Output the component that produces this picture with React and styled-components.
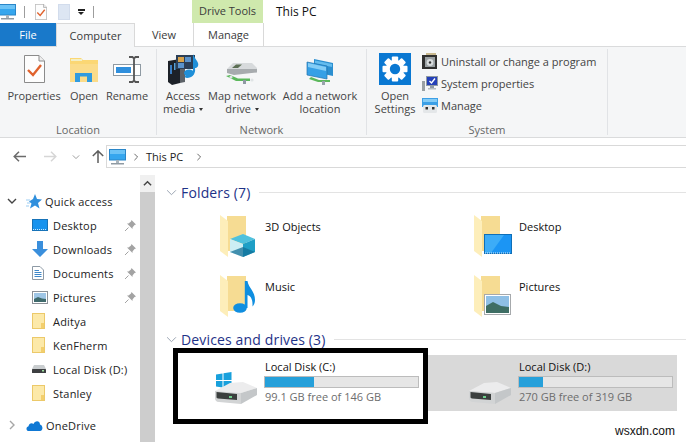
import styled, { createGlobalStyle } from "styled-components";

const GlobalStyle = createGlobalStyle`
  html, body {
    margin: 0;
    padding: 0;
    background: #fff;
  }
  * {
    box-sizing: border-box;
  }
`;

function Monitor({ w = 17, h = 16 }) {
  return (
    <svg width={w} height={h} viewBox="0 0 17 16">
      <rect x="0.5" y="0.5" width="16" height="10.5" fill="#35a6ee" stroke="#2a86c8" />
      <rect x="1" y="1" width="15" height="4" fill="#6cc3f6" />
      <rect x="7" y="11" width="3" height="3" fill="#a9b4bc" />
      <rect x="2" y="14" width="13" height="1.5" fill="#8f9aa3" />
    </svg>
  );
}

function PageCheck({ w = 21, h = 28 }) {
  return (
    <svg width={w} height={h} viewBox="0 0 21 28">
      <path d="M0.5 0.5H15L20.5 6V27.5H0.5Z" fill="#fdfdfd" stroke="#8b8b8b" />
      <path d="M15 0.5V6H20.5" fill="#eee" stroke="#8b8b8b" />
      <path d="M4 15L9 20L17 10" fill="none" stroke="#e0622d" strokeWidth="2.4" />
    </svg>
  );
}

function OpenFolder() {
  return (
    <svg width="29" height="25" viewBox="0 0 29 25">
      <path d="M0 1H11L13 3H28V25H0Z" fill="#fbd774" />
      <rect x="1" y="2" width="11" height="2" fill="#f3efc5" />
      <rect x="0" y="7" width="28" height="18" fill="#fbdc8a" />
      <path d="M5 25V16H22V25H17V19.5H10V25Z" fill="#2f9be0" />
    </svg>
  );
}

function RenameIcon() {
  return (
    <svg width="29" height="27" viewBox="0 0 29 27">
      <rect x="0.5" y="8.5" width="27" height="11" fill="#fff" stroke="#8f9aa3" />
      <rect x="3" y="11" width="15" height="6" fill="#2f8fdd" />
      <path d="M16 1H19.5L21 2.5L22.5 1H26M21 2.5V24.5M16 26H19.5L21 24.5L22.5 26H26" fill="none" stroke="#555" strokeWidth="1.8" />
    </svg>
  );
}

function MediaIcon() {
  return (
    <svg width="33" height="31" viewBox="0 0 33 31">
      <path d="M1 7L13 5V29L5 31L1 28Z" fill="#1c2128" />
      <path d="M13 5L18 8V28L13 29Z" fill="#5c6268" />
      <rect x="3" y="11" width="2" height="9" fill="#3b7fc4" />
      <rect x="7" y="9" width="1.5" height="7" fill="#56a2da" />
      <rect x="9" y="1" width="19" height="14" fill="#2b3f57" />
      <rect x="11" y="3" width="6" height="5" fill="#d8a24a" />
      <rect x="18" y="3" width="6" height="5" fill="#5a93cc" />
      <rect x="11" y="9" width="6" height="5" fill="#5a93cc" />
      <path d="M26 0V16C26 19 23 21 20 21C17 21 17 24 20 24C25 24 29 20 28 14C30 14 32 12 31 9C30 6 28 5 26 0Z" fill="#1f8fd8" />
      <ellipse cx="22" cy="19" rx="5" ry="3.5" fill="#1f8fd8" />
    </svg>
  );
}

function NetDrive() {
  return (
    <svg width="32" height="23" viewBox="0 0 32 23">
      <path d="M1 7L7 1H26L31 6V10L7 11L1 10Z" fill="#d7dadc" />
      <path d="M6 6L10 2.5H16L12 6Z" fill="#5c6f54" />
      <path d="M1 7H31V10.5L8 13L1 11Z" fill="#a7abae" />
      <path d="M0 14L10 19H24V16.5H12L4 13Z" fill="#5cb85c" />
      <rect x="17" y="18" width="3" height="4" fill="#8f9aa3" />
      <circle cx="5" cy="15" r="1.6" fill="#dfe3e5" />
      <circle cx="26" cy="18" r="1.6" fill="#dfe3e5" />
    </svg>
  );
}

function NetPlaces() {
  return (
    <svg width="28" height="26" viewBox="0 0 28 26">
      <path d="M8 0L27 4V17L8 13Z" fill="#2b8fd0" />
      <path d="M9 1.5L26 5V8L9 4.5Z" fill="#63bcef" />
      <path d="M1 3L21 7V20L1 16Z" fill="#36a0e6" stroke="#2274ad" strokeWidth="0.7" />
      <path d="M2 4L20 8V12L2 8Z" fill="#84cdf6" />
      <path d="M3 20L12 23H24V21H13L5 18Z" fill="#5cb85c" />
      <rect x="16" y="22" width="3" height="4" fill="#98a3ab" />
    </svg>
  );
}

function GearTile() {
  return (
    <svg width="32" height="32" viewBox="0 0 32 32">
      <rect width="32" height="32" fill="#0a78d2" />
      <g fill="#fff">
        <circle cx="16" cy="16" r="9.2" />
        <rect x="12.8" y="3.5" width="6.4" height="25" rx="1" />
        <rect x="12.8" y="3.5" width="6.4" height="25" rx="1" transform="rotate(45 16 16)" />
        <rect x="12.8" y="3.5" width="6.4" height="25" rx="1" transform="rotate(90 16 16)" />
        <rect x="12.8" y="3.5" width="6.4" height="25" rx="1" transform="rotate(135 16 16)" />
      </g>
      <circle cx="16" cy="16" r="5.2" fill="#0a78d2" />
    </svg>
  );
}

function UninstallIcon() {
  return (
    <svg width="15" height="16" viewBox="0 0 15 16">
      <path d="M4 0H14V4H4Z" fill="#c9b98f" />
      <rect x="0" y="2" width="15" height="14" fill="#2f2f2f" />
      <rect x="3" y="4" width="10" height="10" fill="#9aa0a3" />
      <circle cx="8" cy="9.5" r="3.4" fill="#d8dcde" />
      <circle cx="8" cy="9.5" r="1.2" fill="#333" />
    </svg>
  );
}

function SystemIcon() {
  return (
    <svg width="16" height="15" viewBox="0 0 16 15">
      <rect x="0" y="5" width="3" height="10" fill="#9aa0a3" />
      <rect x="4.5" y="0.5" width="11" height="9" fill="#2440b8" stroke="#8f9aa3" />
      <path d="M7.5 5L9.5 7L13 2.5" fill="none" stroke="#fff" strokeWidth="1.4" />
      <rect x="8" y="10" width="4" height="2" fill="#8f9aa3" />
      <rect x="6" y="12" width="8" height="1.5" fill="#b5bbc0" />
    </svg>
  );
}

function ManageIcon() {
  return (
    <svg width="16" height="15" viewBox="0 0 16 15">
      <rect x="0" y="0" width="16" height="9" fill="#3c9fe6" />
      <rect x="1" y="1" width="14" height="3" fill="#84cbf5" />
      <rect x="1" y="7" width="14" height="8" rx="1.5" fill="#e4e7e9" />
      <rect x="3.5" y="9" width="2.5" height="2.5" fill="#333" />
      <rect x="10" y="9" width="2.5" height="2.5" fill="#333" />
    </svg>
  );
}

function BackArrow({ color = "#6b6b6b", flip }) {
  return (
    <svg width="13" height="11" viewBox="0 0 13 11" style={flip ? { transform: "scaleX(-1)" } : undefined}>
      <path d="M6 0.7L1.2 5.5L6 10.3M1.2 5.5H13" fill="none" stroke={color} strokeWidth="1.5" />
    </svg>
  );
}

function UpArrow() {
  return (
    <svg width="12" height="13" viewBox="0 0 12 13">
      <path d="M0.8 6L6 0.9L11.2 6M6 0.9V13" fill="none" stroke="#5e5e5e" strokeWidth="1.5" />
    </svg>
  );
}

function Chevron({ dir = "down", size = 9, color = "#555", width = 1.2 }) {
  const d = {
    down: "M1 3L5 7L9 3",
    up: "M1 7L5 3L9 7",
    right: "M3 1L7 5L3 9",
  }[dir];
  return (
    <svg width={size} height={size} viewBox="0 0 10 10">
      <path d={d} fill="none" stroke={color} strokeWidth={width} />
    </svg>
  );
}

function StarIcon() {
  return (
    <svg width="16" height="15" viewBox="0 0 16 15">
      <path d="M9 0L11 5L16 5.5L12 9L13.5 14.5L9 11.5L4 14.5L5.5 9.5L3 7.5L7 5Z" fill="#2f8fdd" />
      <path d="M0 6H4M1 9H4M0 12H3" stroke="#9ccdf2" strokeWidth="1" />
    </svg>
  );
}

function NavDesktop() {
  return (
    <svg width="16" height="12" viewBox="0 0 16 12">
      <rect x="0.5" y="0.5" width="15" height="11" fill="#1793ee" stroke="#1773b8" />
      <path d="M1 10.5H15" stroke="#cfe9fb" strokeDasharray="1 1" />
    </svg>
  );
}

function NavDownload() {
  return (
    <svg width="16" height="16" viewBox="0 0 16 16">
      <path d="M5 0H11V8H16L8 16L0 8H5Z" fill="#3a8fdc" />
    </svg>
  );
}

function NavDocument() {
  return (
    <svg width="12" height="14" viewBox="0 0 12 14">
      <path d="M0.5 0.5H8L11.5 4V13.5H0.5Z" fill="#fff" stroke="#8e9aa5" />
      <path d="M2.5 4.5H7M2.5 6.5H9.5M2.5 8.5H9.5M2.5 10.5H9.5" stroke="#3e88c9" />
    </svg>
  );
}

function NavPicture() {
  return (
    <svg width="16" height="13" viewBox="0 0 16 13">
      <rect x="0.5" y="0.5" width="15" height="12" fill="#fff" stroke="#8c9198" />
      <rect x="2" y="2" width="12" height="9" fill="#9fc6e6" />
      <path d="M2 8L6 6L10 7.5L14 8V11H2Z" fill="#3f6a6c" />
    </svg>
  );
}

function NavFolder() {
  return (
    <svg width="13" height="16" viewBox="0 0 13 16">
      <rect x="0.5" y="0.5" width="12" height="15" fill="#fce9a9" stroke="#ecc969" />
      <rect x="9" y="10" width="3" height="5" fill="#f3cf6d" />
    </svg>
  );
}

function NavDisk() {
  return (
    <svg width="14" height="8" viewBox="0 0 14 8">
      <path d="M2 0H12L14 4H0Z" fill="#c9cdcf" />
      <rect x="0" y="4" width="14" height="4" rx="0.5" fill="#3d3f41" />
      <rect x="10" y="5" width="2" height="1.5" fill="#9fe0a0" />
    </svg>
  );
}

function CloudIcon() {
  return (
    <svg width="17" height="11" viewBox="0 0 17 11">
      <path d="M3 11C0 11 -0.5 7 2.5 6.2C3 3 6 2.5 7.5 4C9 0 14 0.5 14 4.5C17 5 17.5 11 14 11Z" fill="#0f78d4" />
    </svg>
  );
}

function PinIcon() {
  return (
    <svg width="11" height="11" viewBox="0 0 11 11">
      <path d="M6.5 0L11 4.5L9.5 5L7.5 7.5L7.5 9L2 3.5L3.5 3.5L6 1.5Z" fill="#a3a3a3" />
      <path d="M3.5 7.5L0 11" stroke="#a3a3a3" />
    </svg>
  );
}

function BigFolder({ children }) {
  return (
    <svg width="38" height="43" viewBox="0 0 38 43">
      <rect x="7" y="1" width="19" height="35" fill="#f6dc93" />
      <path d="M0 0L8 6V42L0 36Z" fill="#fdeeba" />
      {children}
    </svg>
  );
}

function Cube() {
  return (
    <g>
      <path d="M10 24L23 19L35 24L23 29Z" fill="#4fc1dd" />
      <path d="M10 24L23 29V42L10 37Z" fill="#cdeef4" />
      <path d="M35 24L23 29V42L35 37Z" fill="#1e9fc6" />
      <path d="M10 37L23 32L35 37L23 42Z" fill="#136f97" opacity="0.75" />
    </g>
  );
}

function Note() {
  return (
    <g fill="#0f8ee0">
      <ellipse cx="20" cy="33" rx="6.8" ry="4.8" />
      <path d="M24.8 33V6H27.5C28.5 13 35 16 35 25C35 28 34 30 32.5 31.5C33 25 31 21 27.5 20V33Z" />
    </g>
  );
}

function ScreenBadge() {
  return (
    <g>
      <rect x="10.5" y="19.5" width="27" height="19" fill="#1b95f4" stroke="#0e6fb8" />
      <path d="M11 20H30L17 38H11Z" fill="#3cacf7" />
      <path d="M11 38H37" stroke="#dff1fd" strokeDasharray="1 1" />
    </g>
  );
}

function PhotoBadge() {
  return (
    <g>
      <rect x="10.5" y="19.5" width="26" height="20" fill="#fff" stroke="#a6a9ac" />
      <rect x="12" y="21" width="23" height="17" fill="#8fc0e6" />
      <path d="M12 31L19 27L27 31L35 32V38H12Z" fill="#3e6e64" />
    </g>
  );
}

function DriveIcon({ windows }) {
  return (
    <svg width="44" height="34" viewBox="0 0 44 34">
      {windows && (
        <path d="M1 2.5L7.5 1.5V8H1ZM8.5 1.3L16.5 0V8H8.5ZM1 9H7.5V15.5L1 14.5ZM8.5 9H16.5V17L8.5 15.8Z" fill="#18a0dc" />
      )}
      <path d="M0 19L15 11L28 10L42 16L26 21Z" fill="#ececed" />
      <path d="M26 21L42 16V23L26 32Z" fill="#c4c7c9" />
      <path d="M0 19L26 21V32L4 30C1 30 0 28 0 26Z" fill="#d2d4d5" />
      <path d="M1.5 20L22 22V28L3 26.5C2 26.4 1.5 26 1.5 25Z" fill="#3b3f3e" />
      <rect x="14" y="24" width="3" height="2" fill="#6fd18d" />
    </svg>
  );
}

export default function App() {
  const folders = [
    { name: "3D Objects", badge: <Cube /> },
    { name: "Desktop", badge: <ScreenBadge /> },
    { name: "Music", badge: <Note /> },
    { name: "Pictures", badge: <PhotoBadge /> },
  ];
  const navItems = [
    { name: "Desktop", icon: <NavDesktop />, pin: true },
    { name: "Downloads", icon: <NavDownload />, pin: true },
    { name: "Documents", icon: <NavDocument />, pin: true },
    { name: "Pictures", icon: <NavPicture />, pin: true },
    { name: "Aditya", icon: <NavFolder /> },
    { name: "KenFherm", icon: <NavFolder /> },
    { name: "Local Disk (D:)", icon: <NavDisk /> },
    { name: "Stanley", icon: <NavFolder /> },
  ];

  return (
    <Window>
      <GlobalStyle />
      <TitleBar>
        <QuickAccess>
          <Monitor />
          <QatRule />
          <QatPage><PageCheck w={12} h={16} /></QatPage>
          <BlankPage />
          <QatCaret />
          <QatRule />
        </QuickAccess>
        <ContextTab>Drive Tools</ContextTab>
        <TitleText>This PC</TitleText>
      </TitleBar>

      <TabRow>
        <FileTab>File</FileTab>
        <ActiveTab>Computer</ActiveTab>
        <Tab $w={58}>View</Tab>
        <ManageTab>Manage</ManageTab>
      </TabRow>

      <Ribbon>
        <Group $w={157}>
          <GroupBody $pad={4}>
            <BigButton $w={60}>
              <IconSlot><PageCheck /></IconSlot>
              <BigLabel>Properties</BigLabel>
            </BigButton>
            <BigButton $w={40}>
              <IconSlot><OpenFolder /></IconSlot>
              <BigLabel>Open</BigLabel>
            </BigButton>
            <BigButton $w={46}>
              <IconSlot><RenameIcon /></IconSlot>
              <BigLabel>Rename</BigLabel>
            </BigButton>
          </GroupBody>
          <GroupLabel>Location</GroupLabel>
        </Group>

        <Group $w={210}>
          <GroupBody $pad={3}>
            <BigButton $w={46}>
              <IconSlot><MediaIcon /></IconSlot>
              <BigLabel>Access<br />media <Caret /></BigLabel>
            </BigButton>
            <BigButton $w={72}>
              <IconSlot $drop={8}><NetDrive /></IconSlot>
              <BigLabel>Map network<br />drive <Caret /></BigLabel>
            </BigButton>
            <BigButton $w={84}>
              <IconSlot $drop={5}><NetPlaces /></IconSlot>
              <BigLabel>Add a network<br />location</BigLabel>
            </BigButton>
          </GroupBody>
          <GroupLabel>Network</GroupLabel>
        </Group>

        <Group $w={241}>
          <GroupBody $pad={7} $gap={6}>
            <BigButton $w={42}>
              <IconSlot><GearTile /></IconSlot>
              <BigLabel>Open<br />Settings</BigLabel>
            </BigButton>
            <SmallStack>
              <SmallButton><SmallSlot><UninstallIcon /></SmallSlot>Uninstall or change a program</SmallButton>
              <SmallButton><SmallSlot><SystemIcon /></SmallSlot>System properties</SmallButton>
              <SmallButton><SmallSlot><ManageIcon /></SmallSlot>Manage</SmallButton>
            </SmallStack>
          </GroupBody>
          <GroupLabel>System</GroupLabel>
        </Group>
      </Ribbon>

      <AddressRow>
        <NavButtons>
          <BackArrow />
          <BackArrow color="#d6d6d6" flip />
          <Chevron color="#9a9a9a" size={8} />
          <UpArrow />
        </NavButtons>
        <AddressBox>
          <Monitor />
          <Chevron dir="right" size={8} color="#666" />
          <Crumb>This PC</Crumb>
          <Chevron dir="right" size={8} color="#666" />
        </AddressBox>
      </AddressRow>

      <Main>
        <Sidebar>
          <NavHead>
            <Twisty><Chevron size={10} color="#444" width={1.4} /></Twisty>
            <StarIcon />
            <NavText>Quick access</NavText>
          </NavHead>
          {navItems.map((item) => (
            <NavRow key={item.name}>
              <NavIcon>{item.icon}</NavIcon>
              <NavText>{item.name}</NavText>
              {item.pin && <NavPin><PinIcon /></NavPin>}
            </NavRow>
          ))}
          <OneDriveRow>
            <Twisty><Chevron dir="right" size={10} color="#a6a6a6" width={1.4} /></Twisty>
            <CloudIcon />
            <NavText>OneDrive</NavText>
          </OneDriveRow>
        </Sidebar>

        <ScrollTrack>
          <ScrollUp><Chevron dir="up" size={9} color="#444" width={1.6} /></ScrollUp>
          <ScrollThumb />
        </ScrollTrack>

        <Content>
          <SectionHead>
            <SectionChevron><Chevron size={11} color="#9aa4b2" width={0.9} /></SectionChevron>
            <SectionTitle>Folders (7)</SectionTitle>
            <SectionRule />
          </SectionHead>
          <FolderGrid>
            {folders.map((f) => (
              <FolderTile key={f.name}>
                <BigFolder>{f.badge}</BigFolder>
                <TileName>{f.name}</TileName>
              </FolderTile>
            ))}
          </FolderGrid>

          <SectionHead>
            <SectionChevron><Chevron size={11} color="#9aa4b2" width={0.9} /></SectionChevron>
            <SectionTitle>Devices and drives (3)</SectionTitle>
            <SectionRule />
          </SectionHead>
          <DriveGrid>
            <DriveTile $framed>
              <DriveIconSlot $top={19}><DriveIcon windows /></DriveIconSlot>
              <DriveInfo $top={2}>
                <DriveName>Local Disk (C:)</DriveName>
                <UsageBar><UsageFill style={{ width: `${(46.9 / 146) * 100}%` }} /></UsageBar>
                <FreeText>99.1 GB free of 146 GB</FreeText>
              </DriveInfo>
            </DriveTile>
            <DriveTile $selected>
              <DriveIconSlot $top={17}><DriveIcon /></DriveIconSlot>
              <DriveInfo $top={0}>
                <DriveName>Local Disk (D:)</DriveName>
                <UsageBar><UsageFill style={{ width: `${(49 / 319) * 100}%` }} /></UsageBar>
                <FreeText>270 GB free of 319 GB</FreeText>
              </DriveInfo>
            </DriveTile>
          </DriveGrid>
        </Content>
      </Main>
      <Watermark>wsxdn.com</Watermark>
    </Window>
  );
}

const uiFont = `"Open Sans", "Noto Sans", sans-serif`;

const Window = styled.div`
  position: relative;
  width: 686px;
  height: 442px;
  overflow: hidden;
  display: flex;
  flex-direction: column;
  background: #fff;
  color: #222;
  font-family: ${uiFont};
  font-size: 11px;
`;

const TitleBar = styled.div`
  height: 23px;
  display: flex;
  flex-shrink: 0;
`;

const QuickAccess = styled.div`
  width: 192px;
  display: flex;
  align-items: center;
  gap: 8px;

  svg:first-child {
    margin-left: -1px;
  }
`;

const QatRule = styled.span`
  width: 1px;
  height: 12px;
  background: #9d9d9d;
`;

const QatPage = styled.span`
  display: flex;
  margin-left: 3px;
`;

const BlankPage = styled.span`
  width: 12px;
  height: 16px;
  margin-left: 3px;
  background: #dde6f3;
  border: 1px solid #d2dcec;
`;

const QatCaret = styled.span`
  width: 7px;
  height: 6px;
  border-top: 2px solid #222;
  position: relative;

  &::after {
    content: "";
    position: absolute;
    left: 0;
    top: 1px;
    border-left: 3.5px solid transparent;
    border-right: 3.5px solid transparent;
    border-top: 3.5px solid #222;
  }
`;

const ContextTab = styled.div`
  width: 71px;
  background: #cfe9ad;
  color: #3b3b3b;
  text-align: center;
  line-height: 21px;
`;

const TitleText = styled.div`
  margin-left: 13px;
  line-height: 23px;
  font-size: 12px;
  color: #111;
`;

const TabRow = styled.div`
  height: 23px;
  display: flex;
  flex-shrink: 0;
  line-height: 23px;
  color: #3a3a3a;
`;

const FileTab = styled.div`
  width: 56px;
  background: #1979ca;
  color: #fff;
  text-align: center;
`;

const ActiveTab = styled.div`
  width: 79px;
  margin-bottom: -1px;
  background: #f5f6f7;
  border: 1px solid #d9d9d9;
  border-bottom: none;
  text-align: center;
  position: relative;
  z-index: 1;
`;

const Tab = styled.div`
  width: ${(props) => props.$w}px;
  text-align: center;
`;

const ManageTab = styled.div`
  width: 71px;
  border-left: 1px solid #d9d9d9;
  border-right: 1px solid #d9d9d9;
  text-align: center;
`;

const Ribbon = styled.div`
  height: 92px;
  display: flex;
  flex-shrink: 0;
  background: #f5f6f7;
  border-top: 1px solid #dadbdc;
  border-bottom: 1px solid #dadbdc;
  color: #444;
`;

const Group = styled.div`
  width: ${(props) => props.$w}px;
  display: flex;
  flex-direction: column;
  margin: 2px 0;
  border-right: 1px solid #e1e3e6;
`;

const GroupBody = styled.div`
  flex: 1;
  display: flex;
  gap: ${(props) => props.$gap || 0}px;
  padding-left: ${(props) => props.$pad}px;
`;

const GroupLabel = styled.div`
  height: 13px;
  text-align: center;
  line-height: 15px;
  color: #666;
`;

const BigButton = styled.div`
  width: ${(props) => props.$w}px;
  display: flex;
  flex-direction: column;
  align-items: center;
`;

const IconSlot = styled.div`
  height: 40px;
  padding-top: ${(props) => props.$drop || 0}px;
  display: flex;
  align-items: center;
  justify-content: center;
`;

const BigLabel = styled.div`
  text-align: center;
  white-space: nowrap;
  line-height: 13px;
`;

const Caret = styled.span`
  display: inline-block;
  vertical-align: 2px;
  margin-left: 1px;
  border-left: 2.5px solid transparent;
  border-right: 2.5px solid transparent;
  border-top: 3px solid #333;
`;

const SmallStack = styled.div`
  display: flex;
  flex-direction: column;
  padding-top: 1px;
`;

const SmallButton = styled.div`
  height: 22px;
  display: flex;
  align-items: center;
  white-space: nowrap;
`;

const SmallSlot = styled.span`
  width: 19px;
  display: flex;
  align-items: center;
`;

const AddressRow = styled.div`
  height: 37px;
  flex-shrink: 0;
  display: flex;
  align-items: center;
`;

const NavButtons = styled.div`
  width: 106px;
  display: flex;
  align-items: center;
  padding-left: 13px;
  gap: 18px;

  svg:nth-child(3) {
    margin-left: -3px;
    margin-right: -6px;
  }
`;

const AddressBox = styled.div`
  flex: 1;
  height: 23px;
  display: flex;
  align-items: center;
  gap: 6px;
  padding-left: 2px;
  border: 1px solid #d9d9d9;
  border-right: none;
`;

const Crumb = styled.span`
  color: #222;
  margin-right: 6px;
`;

const Main = styled.div`
  flex: 1;
  min-height: 0;
  display: flex;
`;

const Sidebar = styled.div`
  width: 140px;
  flex-shrink: 0;
  padding-top: 14px;
  display: flex;
  flex-direction: column;
`;

const NavHead = styled.div`
  height: 24px;
  display: flex;
  align-items: center;
`;

const Twisty = styled.span`
  width: 26px;
  padding-left: 7px;
  display: flex;
`;

const NavRow = styled.div`
  height: 24px;
  display: flex;
  align-items: center;
  position: relative;
`;

const OneDriveRow = styled(NavHead)`
  margin-top: 8px;

  svg:nth-of-type(2) {
    margin-left: -2px;
  }
`;

const NavIcon = styled.span`
  width: 53px;
  padding-left: 32px;
  display: flex;
  justify-content: flex-start;
`;

const NavText = styled.span`
  color: #222;
  white-space: nowrap;
  letter-spacing: 0.2px;

  ${NavHead} & {
    margin-left: 3px;
  }
`;

const NavPin = styled.span`
  position: absolute;
  right: 4px;
  top: 7px;
  display: flex;
`;

const ScrollTrack = styled.div`
  width: 15px;
  flex-shrink: 0;
  display: flex;
  flex-direction: column;
`;

const ScrollUp = styled.div`
  height: 17px;
  background: #f0f0f0;
  display: flex;
  align-items: center;
  justify-content: center;
`;

const ScrollThumb = styled.div`
  flex: 1;
  background: #cdcdcd;
`;

const Content = styled.div`
  flex: 1;
  min-width: 0;
  padding-top: 8px;
`;

const SectionHead = styled.div`
  height: 18px;
  display: flex;
  align-items: center;
  padding-left: 11px;
`;

const SectionChevron = styled.span`
  width: 15px;
  display: flex;
`;

const SectionTitle = styled.span`
  font-size: 14px;
  color: #1e3287;
  white-space: nowrap;
  letter-spacing: 0.15px;
`;

const SectionRule = styled.span`
  flex: 1;
  height: 1px;
  margin-left: 8px;
  background: #e3e3e3;
`;

const FolderGrid = styled.div`
  display: grid;
  grid-template-columns: 254px 250px;
  grid-auto-rows: 60px;
  padding: 14px 0 0 18px;
  margin-bottom: -5px;
`;

const FolderTile = styled.div`
  display: flex;
  padding-left: 47px;
  gap: 7px;
`;

const TileName = styled.div`
  color: #111;
  line-height: 15px;
  margin-top: 4px;
  white-space: nowrap;
`;

const DriveName = styled(TileName)`
  padding-left: 1px;
`;

const DriveGrid = styled.div`
  display: grid;
  grid-template-columns: 255px 249px;
  padding-left: 18px;
  align-items: start;
`;

const DriveTile = styled.div`
  height: ${(props) => (props.$framed ? "76px" : "56px")};
  margin-top: ${(props) => (props.$selected ? "7px" : "0")};
  display: flex;
  align-items: flex-start;
  padding-left: ${(props) => (props.$framed ? "37px" : "41px")};
  background: ${(props) => (props.$selected ? "#d9d9d9" : "transparent")};
  border: ${(props) => (props.$framed ? "5px solid #000" : "none")};
  gap: 5px;
`;

const DriveIconSlot = styled.span`
  display: flex;
  padding-top: ${(props) => props.$top}px;
`;

const DriveInfo = styled.div`
  display: flex;
  flex-direction: column;
  width: 155px;
  padding-top: ${(props) => props.$top}px;
`;

const UsageBar = styled.div`
  height: 12px;
  margin-top: 2px;
  background: #e6e6e6;
  border: 1px solid #bcbcbc;
`;

const UsageFill = styled.div`
  height: 100%;
  background: #26a0da;
`;

const FreeText = styled.div`
  margin-top: 1px;
  padding-left: 1px;
  color: #6d6d6d;
  line-height: 16px;
  white-space: nowrap;
`;

const Watermark = styled.div`
  position: absolute;
  right: 11px;
  bottom: 4px;
  font-family: "Liberation Sans", sans-serif;
  font-size: 12px;
  color: #111;
`;
